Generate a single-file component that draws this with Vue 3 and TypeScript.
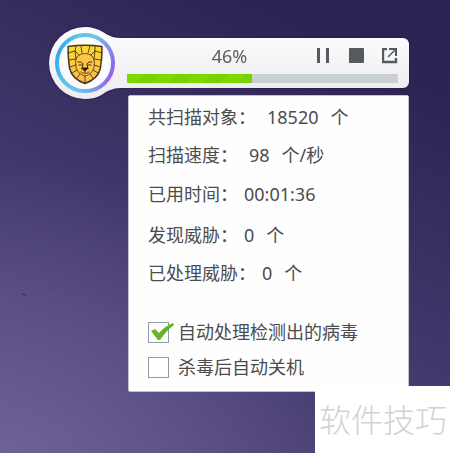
<script setup lang="ts">
import { computed, ref } from 'vue'

interface Stat {
  label: string
  value: string
  unit?: string
}

interface StatGroup {
  name: string
  items: Stat[]
}

const percent = ref(46)
const paused = ref(false)
const autoHandle = ref(true)
const autoShutdown = ref(false)

const groups: StatGroup[] = [
  {
    name: 'rate',
    items: [
      { label: '共扫描对象：', value: '18520', unit: '个' },
      { label: '扫描速度：', value: '98', unit: '个/秒' },
    ],
  },
  { name: 'time', items: [{ label: '已用时间：', value: '00:01:36' }] },
  {
    name: 'threat',
    items: [
      { label: '发现威胁：', value: '0', unit: '个' },
      { label: '已处理威胁：', value: '0', unit: '个' },
    ],
  },
]

const fillStyle = computed(() => ({ width: `${percent.value}%` }))
</script>

<template>
  <main class="desktop">
    <svg class="specks" viewBox="0 0 60 16" aria-hidden="true">
      <path d="M0 6h3M2 10l6-3M10 12l3-2M50 5h5M49 3h2" stroke="#8a4c9c" stroke-opacity=".4" />
      <path d="M22 4l4 1" stroke="#2c2352" />
    </svg>

    <header class="scanner">
      <svg class="badge" viewBox="0 0 74 72" aria-hidden="true">
        <defs>
          <linearGradient id="shell" x1="0" y1="0" x2="0" y2="1">
            <stop offset="0.1" stop-color="#fbfbfc" />
            <stop offset="0.9" stop-color="#eeeef0" />
          </linearGradient>
          <linearGradient id="ring" x1="0" y1="0.35" x2="1" y2="0.65">
            <stop offset="0" stop-color="#38a6f4" />
            <stop offset="0.25" stop-color="#5bc6e8" />
            <stop offset="0.55" stop-color="#6cc5e6" />
            <stop offset="0.8" stop-color="#7f92ee" />
            <stop offset="1" stop-color="#9361f0" />
          </linearGradient>
          <linearGradient id="mane" x1="0" y1="0" x2="0" y2="1">
            <stop offset="0" stop-color="#f9dc30" />
            <stop offset="1" stop-color="#ffb650" />
          </linearGradient>
        </defs>
        <path
          d="M54 5C61 10 66 11 74 11V61C66 61 61 62 54 67C48 71 42 72 36 72A36 36 0 0 1 36 0C43 0 49 2 54 5Z"
          fill="url(#shell)"
        />
        <circle cx="36" cy="36" r="28" fill="#fcfcfd" stroke="url(#ring)" stroke-width="4" />
        <g transform="translate(18 18)" stroke="#4a3815" stroke-linejoin="round" stroke-linecap="round">
          <path
            d="M1 1.5Q18-.8 35 1.5Q35 13 33.5 23Q31 34 18 38.5Q5 34 2.5 23Q1 13 1 1.5Z"
            fill="url(#mane)"
            stroke-width="1.5"
          />
          <path
            d="M12 10Q18 7 24 10L27 14Q28 18 27 23Q25 29 18 31Q11 29 9 23Q8 18 9 14Z"
            fill="#fcc544"
            stroke-width="0.8"
          />
          <path
            d="M9 1L8 6L12 10M14 1L15 8M23 1L21 8M28 1L28 6L24 10M1 8L8 6M35 8L28 6M8 6L9 14M28 6L27 14M2 15L9 14M34 15L27 14M3 22L9 20M33 22L27 20M5 28L10 25M31 28L26 25M10 33L13 29M26 33L23 29M18 31V38"
            fill="none"
            stroke-width="0.9"
          />
          <path d="M11 17L14 17L16 19M25 17L22 17L20 19M12 20H15M21 20H24M16 19L15 24M20 19L21 24" fill="none" stroke-width="1" />
          <path d="M15 23H21L18 26Z" fill="#241c10" stroke="#241c10" stroke-width="1" />
          <path d="M18 26V28M14 27Q16 29 18 28Q20 29 22 27" fill="none" stroke-width="0.8" />
        </g>
      </svg>

      <div class="bar">
        <div class="bar-top">
          <span class="percent">{{ percent }}%</span>
          <div class="actions">
            <button type="button" aria-label="暂停" @click="paused = !paused">
              <svg viewBox="0 0 16 16"><path d="M1 0h3v15H1zM10 0h3v15h-3z" fill="#555a60" /></svg>
            </button>
            <button type="button" aria-label="停止">
              <svg viewBox="0 0 16 16"><rect x="0" y="0" width="15" height="15" rx="1" fill="#555a60" /></svg>
            </button>
            <button type="button" aria-label="打开">
              <svg viewBox="0 0 16 16" fill="none" stroke="#555a60">
                <path d="M5 1H1V14H14V10" stroke-width="2.4" />
                <path d="M7 1H14V8" stroke-width="2" />
                <path d="M13 2L6 9" stroke-width="1.4" />
              </svg>
            </button>
          </div>
        </div>
        <div class="track" role="progressbar" :aria-valuenow="percent" aria-valuemin="0" aria-valuemax="100">
          <div class="fill" :style="fillStyle"></div>
        </div>
      </div>
    </header>

    <section class="panel">
      <div class="groups">
        <dl v-for="g in groups" :key="g.name" class="stats" :class="g.name">
          <div v-for="s in g.items" :key="s.label" class="stat">
            <dt>{{ s.label }}</dt>
            <dd>
              <span>{{ s.value }}</span>
              <span v-if="s.unit">{{ s.unit }}</span>
            </dd>
          </div>
        </dl>
      </div>
      <div class="options">
        <label class="option">
          <span class="box">
            <input v-model="autoHandle" type="checkbox" />
            <svg v-if="autoHandle" class="tick" viewBox="0 0 24 20" aria-hidden="true">
              <path d="M1 9L5 7L9 11Q15 4 23 1L24 3Q17 8 10 18H8Z" fill="#66b51d" />
            </svg>
          </span>
          自动处理检测出的病毒
        </label>
        <label class="option">
          <span class="box"><input v-model="autoShutdown" type="checkbox" /></span>
          杀毒后自动关机
        </label>
      </div>
    </section>

    <aside class="mark">软件技巧</aside>
  </main>
</template>

<style>
body {
  margin: 0;
}
</style>

<style scoped>
.desktop {
  position: relative;
  box-sizing: border-box;
  min-height: 100vh;
  padding: 27px 41px 61px 49px;
  overflow: hidden;
  background:
    radial-gradient(circle at 0% 108%, rgba(128, 116, 170, 0.6), rgba(128, 116, 170, 0) 50%),
    linear-gradient(25deg, #574b82 0%, #4b4076 28%, #3b3163 58%, #2d2454 85%, #2b2252 100%);
  color: #4c4c4e;
  font-family: "Noto Sans", "Noto Sans CJK SC", sans-serif;
  font-size: 18px;
  line-height: 24px;
}

.specks {
  position: absolute;
  top: 290px;
  left: 0;
  width: 60px;
  height: 16px;
}

.scanner {
  display: flex;
  align-items: center;
  filter: drop-shadow(0 0 1px rgba(20, 12, 50, 0.6));
}

.badge {
  flex: none;
  width: 74px;
  height: 72px;
}

.bar {
  flex: 1;
  box-sizing: border-box;
  height: 50px;
  margin-left: -1px;
  padding: 6px 11px 5px 5px;
  border-radius: 0 6px 6px 0;
  background: linear-gradient(#fbfbfc, #eeeef0);
}

.bar-top {
  display: flex;
  align-items: center;
  height: 24px;
}

.percent {
  flex: 1;
  padding-left: 16px;
  text-align: center;
  color: #5c5c60;
}

.actions {
  display: flex;
  gap: 17px;
}

.actions button {
  width: 16px;
  height: 16px;
  padding: 0;
  border: 0;
  background: none;
  cursor: pointer;
}

.actions svg {
  display: block;
  width: 16px;
  height: 16px;
}

.track {
  height: 9px;
  margin-top: 6px;
  background: #cacfd3;
}

.fill {
  height: 100%;
  background: repeating-linear-gradient(135deg, #7fd900 0 12px, #79d004 12px 24px);
}

.panel {
  margin: -4px 0 0 79px;
  padding: 9px 18px 12px 19px;
  border: 1px solid #c4c1d0;
  border-radius: 2px;
  background: #fefefe;
}

.groups {
  display: grid;
  gap: 15px;
}

.stats {
  display: grid;
  gap: 14px;
  margin: 0;
}

.stat {
  display: flex;
  gap: 6px;
}

.rate .stat {
  gap: 11px;
}

.threat {
  padding-top: 2px;
}

.stat dd {
  display: flex;
  gap: 12px;
  margin: 0;
}

.options {
  display: grid;
  gap: 11px;
  margin-top: 35px;
}

.option {
  display: flex;
  align-items: center;
  gap: 9px;
}

.box {
  position: relative;
  display: flex;
}

.box input {
  appearance: none;
  box-sizing: border-box;
  width: 21px;
  height: 21px;
  margin: 0;
  border: 1px solid #8e9ba8;
  background: #fff;
}

.tick {
  position: absolute;
  top: 0;
  left: 2px;
  width: 24px;
  height: 20px;
  pointer-events: none;
}

.mark {
  position: absolute;
  right: 0;
  bottom: 0;
  padding: 10px 3px 9px 4px;
  background: #fff;
  color: #d2d2d2;
  font-size: 32px;
  font-weight: 300;
  line-height: 48px;
}
</style>
